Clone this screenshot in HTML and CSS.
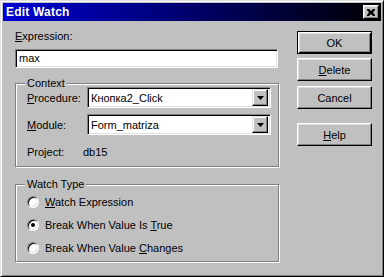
FILE: index.html
```html
<!DOCTYPE html>
<html lang="en">
<head>
    <meta charset="UTF-8">
    <title>Edit Watch</title>
    <link rel="stylesheet" href="styles.css">
</head>
<body>
    <div class="window">
        <div class="titlebar">
            <span class="title">Edit Watch</span>
            <span class="close-btn">
                <svg width="8" height="7" viewBox="0 0 8 7">
                    <path d="M0 0h2l2 2 2-2h2v1l-2 2.5 2 2.5v1h-2l-2-2-2 2h-2v-1l2-2.5-2-2.5z" fill="#000"/>
                </svg>
            </span>
        </div>

        <div class="body">
            <div class="main">
                <div class="label"><u>E</u>xpression:</div>
                <div class="textbox">max</div>

                <div class="group group-context">
                    <div class="group-title">Context</div>
                    <div class="row">
                        <span class="row-label"><u>P</u>rocedure:</span>
                        <div class="combo">
                            <span class="combo-text">Кнопка2_Click</span>
                            <span class="combo-btn"><svg width="7" height="4" viewBox="0 0 7 4"><path d="M0 0h7l-3.5 4z" fill="#000"/></svg></span>
                        </div>
                    </div>
                    <div class="row">
                        <span class="row-label"><u>M</u>odule:</span>
                        <div class="combo">
                            <span class="combo-text">Form_matriza</span>
                            <span class="combo-btn"><svg width="7" height="4" viewBox="0 0 7 4"><path d="M0 0h7l-3.5 4z" fill="#000"/></svg></span>
                        </div>
                    </div>
                    <div class="row row-project">
                        <span class="row-label">Project:</span>
                        <span>db15</span>
                    </div>
                </div>

                <div class="group group-watch">
                    <div class="group-title">Watch Type</div>
                    <div class="radio-row"><span class="radio"></span><span><u>W</u>atch Expression</span></div>
                    <div class="radio-row"><span class="radio checked"></span><span>Break When Value Is <u>T</u>rue</span></div>
                    <div class="radio-row"><span class="radio"></span><span>Break When Value <u>C</u>hanges</span></div>
                </div>
            </div>

            <div class="buttons">
                <div class="btn btn-default">OK</div>
                <div class="btn btn-delete"><u>D</u>elete</div>
                <div class="btn btn-cancel">Cancel</div>
                <div class="btn btn-help"><u>H</u>elp</div>
            </div>
        </div>
    </div>
</body>
</html>
```

FILE: styles.css
```css
/* Global */
body {
    margin: 0;
    font-family: "Liberation Sans", Arial, sans-serif;
    font-size: 11px;
    color: #000;
    background: #c0c0c0;
}

u {
    text-decoration: underline;
    text-underline-offset: 1px;
}

/* Window frame */
.window {
    width: 384px;
    height: 277px;
    box-sizing: border-box;
    padding: 2px;
    background: #c0c0c0;
    border: 1px solid;
    border-color: #dfdfdf #000 #000 #dfdfdf;
    box-shadow: inset 1px 1px #fff, inset -1px -1px #808080;
}

.titlebar {
    height: 18px;
    display: flex;
    align-items: center;
    justify-content: space-between;
    padding-left: 3px;
    background: linear-gradient(to right, #0000d4, #000000);
}

.title {
    color: #fff;
    font-weight: bold;
    font-size: 12px;
    line-height: 18px;
    letter-spacing: 0.2px;
}

.close-btn {
    width: 16px;
    height: 14px;
    box-sizing: border-box;
    margin-right: 2px;
    display: flex;
    align-items: center;
    justify-content: center;
    background: #c0c0c0;
    border: 1px solid;
    border-color: #fff #000 #000 #fff;
    box-shadow: inset -1px -1px #808080, inset 1px 1px #dfdfdf;
}

/* Dialog body */
.body {
    display: flex;
    padding-left: 12px;
}

.main {
    width: 264px;
    padding-top: 9px;
}

.label {
    line-height: 13px;
}

/* Sunken edit field */
.textbox {
    width: 263px;
    height: 19px;
    box-sizing: border-box;
    margin-top: 6px;
    padding: 2px 3px;
    line-height: 13px;
    background: #fff;
    border: 1px solid;
    border-color: #808080 #fff #fff #808080;
    box-shadow: inset 1px 1px #000, inset -1px -1px #dfdfdf;
}

/* Etched group box */
.group {
    border: 1px solid #808080;
    box-shadow: inset 1px 1px #fff, 1px 1px #fff;
    padding: 0 7px 0 11px;
}

.group-title {
    width: fit-content;
    margin: -7px 0 0 -2px;
    padding: 0 2px;
    line-height: 13px;
    background: #c0c0c0;
}

.group-context {
    margin-top: 15px;
    padding-bottom: 8px;
}

.group-context .group-title {
    margin-bottom: -3px;
}

.row {
    display: flex;
    align-items: center;
    height: 21px;
    margin-top: 6px;
}

.group-title + .row {
    margin-top: 0;
}

.row-label {
    width: 60px;
}

.row-project {
    height: 13px;
    margin-top: 10px;
}

.row-project .row-label {
    width: 56px;
}

/* Combo box */
.combo {
    width: 184px;
    height: 21px;
    box-sizing: border-box;
    display: flex;
    align-items: center;
    justify-content: space-between;
    padding: 2px;
    background: #fff;
    border: 1px solid;
    border-color: #808080 #fff #fff #808080;
    box-shadow: inset 1px 1px #000, inset -1px -1px #dfdfdf;
}

.combo-text {
    padding-left: 1px;
}

.combo-btn {
    width: 16px;
    height: 17px;
    box-sizing: border-box;
    display: flex;
    align-items: center;
    justify-content: center;
    background: #c0c0c0;
    border: 1px solid;
    border-color: #dfdfdf #000 #000 #dfdfdf;
    box-shadow: inset -1px -1px #808080, inset 1px 1px #fff;
}

/* Radio buttons */
.group-watch {
    margin-top: 17px;
    padding-bottom: 2px;
}

.group-watch .group-title {
    margin-bottom: -1px;
}

.radio-row {
    display: flex;
    align-items: center;
    height: 23px;
}

.radio {
    width: 12px;
    height: 12px;
    box-sizing: border-box;
    margin-right: 6px;
    border-radius: 50%;
    background: #fff;
    border: 1px solid;
    border-color: #808080 #fff #fff #808080;
    box-shadow: inset 1px 1px #000, inset -1px -1px #dfdfdf;
    display: flex;
    align-items: center;
    justify-content: center;
}

.radio.checked::after {
    content: '';
    width: 4px;
    height: 4px;
    border-radius: 50%;
    background: #000;
}

/* Command buttons */
.buttons {
    margin-left: 18px;
    padding-top: 10px;
    width: 75px;
}

.btn {
    height: 23px;
    box-sizing: border-box;
    display: flex;
    align-items: center;
    justify-content: center;
    background: #c0c0c0;
    border: 1px solid;
    border-color: #fff #000 #000 #fff;
    box-shadow: inset -1px -1px #808080, inset 1px 1px #dfdfdf;
}

.btn-default {
    border-color: #000;
    box-shadow: inset 1px 1px #fff, inset -1px -1px #000, inset 2px 2px #dfdfdf, inset -2px -2px #808080;
}

.btn-delete {
    margin-top: 4px;
}

.btn-cancel {
    margin-top: 5px;
}

.btn-help {
    margin-top: 14px;
}
```
